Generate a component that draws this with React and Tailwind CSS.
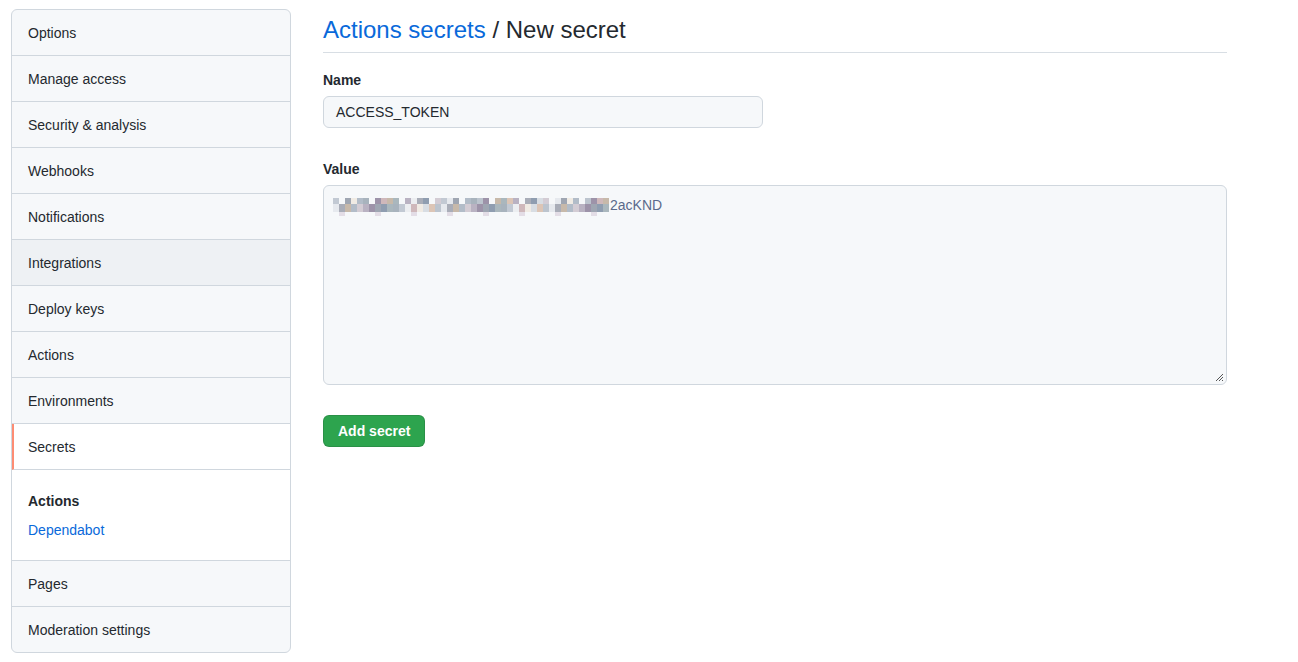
import { useState } from "react";

const NAV_TOP = [
  "Options",
  "Manage access",
  "Security & analysis",
  "Webhooks",
  "Notifications",
  "Integrations",
  "Deploy keys",
  "Actions",
  "Environments",
];

// palette sampled from the blurred token
const PALETTE = [
  "#a9adb8", "#9d93a9", "#c2c9d3", "#dcc5b6", "#b2bcc8", "#8f9db0",
  "#cfb8bb", "#e6e9ee", "#b9b2c2", "#a8b3bd", "#d8dde3", "#c7b9aa",
  "#9fa6b2", "#eceef1", "#bcc4ce", "#d3ccd4", "#aab7bd", "#f0ebe4",
];

// 46 cells, three rows each; light rows sprinkled in so it looks patchy
const MOSAIC = Array.from({ length: 46 }, (_, i) => [
  (i * 7 + 3) % 5 === 0 ? "#f6f8fa" : PALETTE[(i * 5 + 2) % PALETTE.length],
  PALETTE[(i * 11 + 7) % PALETTE.length],
  i % 6 === 1 ? "#e3dde6" : "#f6f8fa",
]);

function NavItem({ label, selected, hovered }) {
  let cls =
    "flex h-[46px] items-center border-b border-[#d0d7de] px-4 pt-[2px] text-[14px] text-[#24292f]";
  if (selected) {
    cls += " bg-white border-l-2 border-l-[#fd8c73] pl-[14px]";
  } else if (hovered) {
    cls += " bg-[#eef1f4]";
  }
  return <div className={cls}>{label}</div>;
}

export default function App() {
  const [name] = useState("ACCESS_TOKEN");

  return (
    <div
      className="min-h-[662px] bg-white text-[#24292f]"
      style={{ fontFamily: '"Liberation Sans", Arial, sans-serif' }}
    >
      <div className="flex items-start gap-8 pl-[11px] pt-[9px]">
        {/* sidebar */}
        <nav className="w-[280px] shrink-0 overflow-hidden rounded-md border border-[#d0d7de] bg-[#f6f8fa]">
          {NAV_TOP.map((label) => (
            <NavItem key={label} label={label} hovered={label === "Integrations"} />
          ))}
          <NavItem label="Secrets" selected />
          <div className="flex h-[91px] flex-col justify-center border-b border-[#d0d7de] bg-white px-4">
            <div className="text-[14px] font-bold leading-[20px] text-[#24292f]">Actions</div>
            <div className="mt-[9px] text-[14px] leading-[20px] text-[#0969da]">Dependabot</div>
          </div>
          <NavItem label="Pages" />
          <div className="flex h-[45px] items-center px-4 pt-[2px] text-[14px] text-[#24292f]">
            Moderation settings
          </div>
        </nav>

        {/* main */}
        <main className="w-[904px]">
          <div className="flex h-[44px] items-start border-b border-[#d8dee4] pt-[4px]">
            <h2 className="text-[24px] leading-[34px] font-normal">
              <span className="text-[#0969da]">Actions secrets</span>
              <span className="text-[#24292f]"> / New secret</span>
            </h2>
          </div>

          <label className="mt-[17px] block text-[14px] font-bold leading-[21px]">Name</label>
          <div className="mt-[5px] flex h-[32px] w-[440px] items-center rounded-md border border-[#d0d7de] bg-[#f6f8fa] px-3 pt-px text-[14px]">
            {name}
          </div>

          <label className="mt-[31px] block text-[14px] font-bold leading-[21px]">Value</label>
          <div className="relative mt-[5px] h-[200px] w-[904px] rounded-md border border-[#d0d7de] bg-[#f6f8fa] pl-[9px] pt-[12px]">
            <div className="flex items-start">
              <div className="flex">
                {MOSAIC.map((c, i) => (
                  <div key={i} className="flex w-[6px] flex-col">
                    <div className="h-[6px]" style={{ backgroundColor: c[0] }} />
                    <div className="h-[8px]" style={{ backgroundColor: c[1] }} />
                    <div className="h-[4px]" style={{ backgroundColor: c[2] }} />
                  </div>
                ))}
              </div>
              <span className="ml-[1px] mt-[-1px] text-[14px] leading-[16px] text-[#5b6a8c]">
                2acKND
              </span>
            </div>
            <svg
              className="absolute bottom-[2px] right-[2px]"
              width="9"
              height="9"
              viewBox="0 0 9 9"
            >
              <path d="M8 1 L1 8 M8 4 L4 8 M8 7 L7 8" stroke="#555" strokeWidth="1" />
            </svg>
          </div>

          <button className="mt-[30px] flex h-[32px] items-center rounded-md border border-[#1b1f23]/15 bg-[#2da44e] px-[14px] text-[14px] font-bold text-white">
            Add secret
          </button>
        </main>
      </div>
    </div>
  );
}
